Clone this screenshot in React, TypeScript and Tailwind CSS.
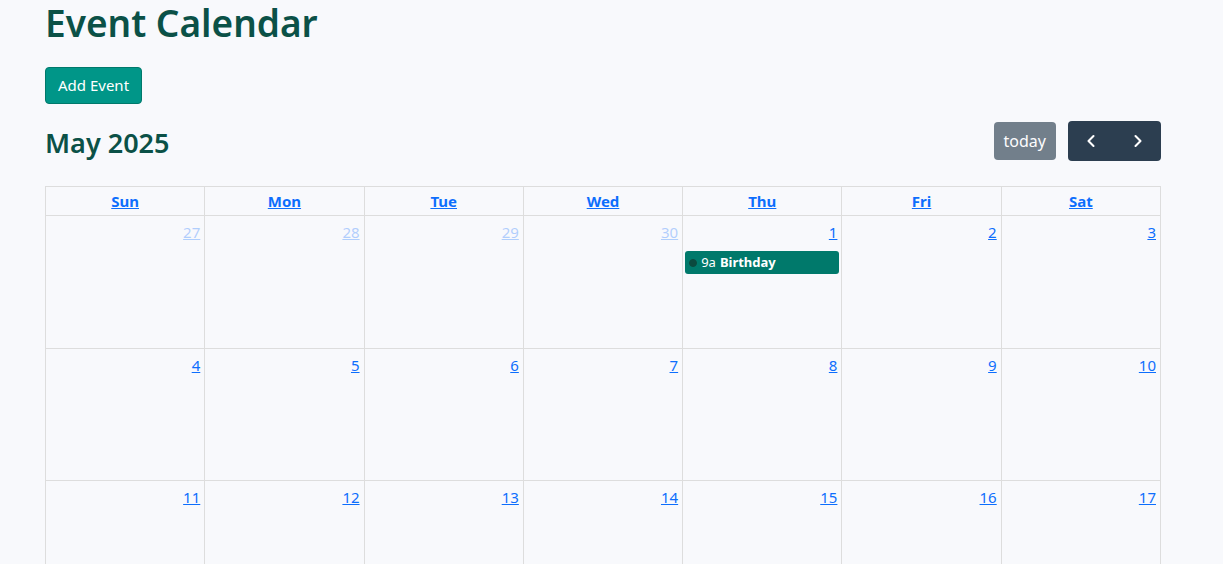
import { ChevronLeft, ChevronRight } from "lucide-react";

type Day = { n: number; other?: boolean };

const weeks: Day[][] = [
  [{ n: 27, other: true }, { n: 28, other: true }, { n: 29, other: true }, { n: 30, other: true }, { n: 1 }, { n: 2 }, { n: 3 }],
  [4, 5, 6, 7, 8, 9, 10].map((n) => ({ n })),
  [11, 12, 13, 14, 15, 16, 17].map((n) => ({ n })),
  [18, 19, 20, 21, 22, 23, 24].map((n) => ({ n })),
  [25, 26, 27, 28, 29, 30, 31].map((n) => ({ n })),
];

const dayNames = ["Sun", "Mon", "Tue", "Wed", "Thu", "Fri", "Sat"];

const App = () => (
  <div className="min-h-screen bg-[#f8f9fc] font-['Noto_Sans',sans-serif]">
    <div className="pl-[45px] w-[1161px]">
      <h1 className="text-[37px] leading-[46px] font-semibold text-[#0b5147]">Event Calendar</h1>
      <button className="mt-[21px] h-[37px] px-[12px] rounded-[4px] bg-[#009688] border border-[#00796b] text-white text-[15px]">
        Add Event
      </button>

      <div className="mt-[17px] flex items-center justify-between">
        <h2 className="text-[27px] font-semibold text-[#0b5147] leading-none pt-[3px]">May 2025</h2>
        <div className="flex items-center gap-3">
          <button className="h-[38px] px-[10px] rounded-[4px] bg-[#2c3e50] opacity-65 text-white text-[16px]">today</button>
          <div className="flex h-[40px] rounded-[4px] bg-[#2c3e50] overflow-hidden">
            <button className="w-[46px] flex items-center justify-center text-white">
              <ChevronLeft size={20} strokeWidth={2.5} />
            </button>
            <button className="w-[47px] flex items-center justify-center text-white">
              <ChevronRight size={20} strokeWidth={2.5} />
            </button>
          </div>
        </div>
      </div>

      <div className="mt-[25px] border-l border-t border-[#dddddd]">
        <div className="grid grid-cols-7">
          {dayNames.map((d) => (
            <div key={d} className="h-[29px] border-r border-b border-[#dddddd] flex items-center justify-center">
              <a className="text-[15px] font-bold text-[#0d6efd] underline">{d}</a>
            </div>
          ))}
        </div>
        {weeks.map((w, i) => (
          <div key={i} className="grid grid-cols-7">
            {w.map((d, j) => (
              <div key={j} className="h-[132.5px] border-r border-b border-[#dddddd] flex flex-col">
                <div className={`flex justify-end pr-[4px] pt-[6px] ${d.other ? "opacity-30" : ""}`}>
                  <a className="text-[15px] leading-[20px] text-[#0d6efd] underline">{d.n}</a>
                </div>
                {i === 0 && j === 4 && (
                  <div className="mx-[2px] mt-[9px] h-[23px] rounded-[3px] bg-[#00796b] flex items-center px-[4px] text-white text-[13px]">
                    <span className="w-[8px] h-[8px] rounded-full bg-[#0b4a3f] border border-[#0b4a3f] mr-[4px]" />
                    <span className="mr-[4px]">9a</span>
                    <span className="font-bold">Birthday</span>
                  </div>
                )}
              </div>
            ))}
          </div>
        ))}
      </div>
    </div>
  </div>
);

export default App;
